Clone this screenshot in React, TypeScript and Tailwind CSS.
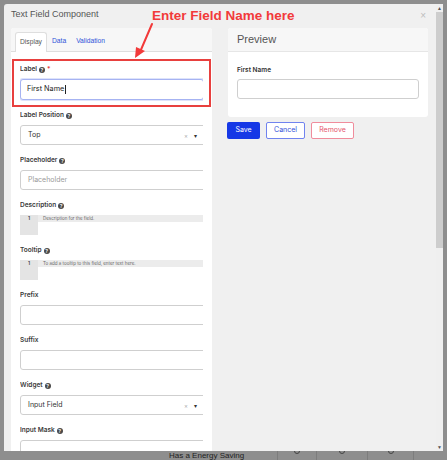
import React from 'react';

const Help: React.FC = () => (
  <span className="ml-[2px] inline-flex h-[6px] w-[6px] items-center justify-center rounded-full bg-[#4a4a4a] text-[5px] font-bold leading-none text-white">
    ?
  </span>
);

interface FieldProps {
  label: string;
  help?: boolean;
  required?: boolean;
  children: React.ReactNode;
}

const Field: React.FC<FieldProps> = ({ label, help, required, children }) => (
  <div className="mb-[11px]">
    <div className="mb-[4px] flex h-[10px] items-center text-[6.5px] font-semibold text-[#3a3a3a]">
      {label}
      {help && <Help />}
      {required && <span className="ml-[2px] text-[#e53935]">*</span>}
    </div>
    {children}
  </div>
);

const TextInput: React.FC<{ value?: string; placeholder?: string }> = ({ value, placeholder }) => (
  <div className="flex h-[20px] w-[192px] items-center rounded-[3px] border border-[#cfcfcf] bg-white px-[7px] text-[7px]">
    {value && <span className="text-[#222]">{value}</span>}
    {placeholder && <span className="text-[#9a9a9a]">{placeholder}</span>}
  </div>
);

const Select: React.FC<{ value: string }> = ({ value }) => (
  <div className="flex h-[20px] w-[192px] items-center rounded-[3px] border border-[#cfcfcf] bg-white pl-[7px] pr-[14px] text-[7px] text-[#333]">
    <span className="flex-1">{value}</span>
    <span className="mr-[6px] text-[6px] text-[#aaa]">×</span>
    <span className="text-[6px] text-[#333]">▾</span>
  </div>
);

const Editor: React.FC<{ text: string }> = ({ text }) => (
  <div className="flex h-[20px] w-[192px]">
    <div className="flex h-full w-[18px] justify-center bg-[#e4e4e4]">
      <span className="text-[5px] leading-[7px] font-semibold text-[#444]">1</span>
    </div>
    <div className="h-[7px] flex-1 bg-[#ececec] pl-[5px] text-[4.5px] leading-[7px] text-[#666]">{text}</div>
  </div>
);

export default function App() {
  return (
    <div
      className="h-[460px] w-[447px] overflow-hidden bg-[#8e8e8e]"
      style={{ fontFamily: '"Liberation Sans", Arial, sans-serif' }}
    >
      <div className="flex h-[451px] pl-[4px] pt-[4px]">
        <div className="relative flex h-[447px] w-[432px] flex-col overflow-hidden rounded-tl-[3px] bg-[#f0f0f0]">
          {/* title */}
          <div className="flex h-[24px] shrink-0 items-center justify-between pl-[7px] pr-[10px] pb-[2px]">
            <span className="text-[9px] text-[#555]">Text Field Component</span>
            <span className="text-[10px] text-[#bdbdbd]">×</span>
          </div>

          <div className="flex gap-[16px] pl-[7px]">
            {/* left card */}
            <div className="w-[201px] shrink-0 rounded-t-[3px] bg-white">
              <div className="flex h-[24px] items-end gap-[5px] rounded-t-[3px] border-b border-[#dedede] bg-[#f7f7f7] pl-[4px] text-[6.7px]">
                <div className="-mb-px flex h-[20px] w-[32px] items-center justify-center rounded-t-[3px] border border-b-0 border-[#dedede] bg-white text-[#555]">
                  Display
                </div>
                <div className="flex h-[19px] items-center gap-[10px] text-[#2f52d9]">
                  <span>Data</span>
                  <span>Validation</span>
                </div>
              </div>

              <div className="relative pt-[13px] pl-[9px]" style={{ fontFamily: 'Inter, "Liberation Sans", sans-serif' }}>
                <div className="w-[183px] overflow-hidden">
                  <Field label="Label" help required>
                    <div className="flex h-[21px] w-[184px] items-center rounded-[3px] border border-[#a6b3f2] bg-white px-[6px] text-[7.3px] text-[#222] shadow-[0_0_0_1px_#dde3fb]">
                      First Name<span className="ml-px h-[9px] w-px bg-[#222]" />
                    </div>
                  </Field>
                  <Field label="Label Position" help>
                    <Select value="Top" />
                  </Field>
                  <Field label="Placeholder" help>
                    <TextInput placeholder="Placeholder" />
                  </Field>
                  <Field label="Description" help>
                    <Editor text="Description for the field." />
                  </Field>
                  <Field label="Tooltip" help>
                    <Editor text="To add a tooltip to this field, enter text here." />
                  </Field>
                  <Field label="Prefix">
                    <TextInput />
                  </Field>
                  <Field label="Suffix">
                    <TextInput />
                  </Field>
                  <Field label="Widget" help>
                    <Select value="Input Field" />
                  </Field>
                  <Field label="Input Mask" help>
                    <TextInput />
                  </Field>
                </div>

                {/* red highlight box */}
                <div className="absolute left-[1px] top-[7px] h-[48px] w-[199px] border-2 border-[#e8403e]" />
              </div>
            </div>

            {/* right column */}
            <div className="w-[200px] shrink-0" style={{ fontFamily: 'Inter, "Liberation Sans", sans-serif' }}>
              <div className="rounded-[3px] bg-white">
                <div className="flex h-[24px] items-center rounded-t-[3px] border-b border-[#e6e6e6] bg-[#f7f7f7] pl-[9px] text-[11px] text-[#555]" style={{ fontFamily: '"Liberation Sans", Arial, sans-serif' }}>
                  Preview
                </div>
                <div className="px-[9px] pb-[18px] pt-[14px]">
                  <div className="mb-[4px] h-[9px] text-[6.5px] leading-[9px] font-semibold text-[#333]">First Name</div>
                  <div className="h-[20px] w-[182px] rounded-[3px] border border-[#cfcfcf] bg-white" />
                </div>
              </div>
              <div className="mt-[5px] -ml-px flex gap-[6px] text-[7px]">
                <div className="flex h-[17px] w-[33px] items-center justify-center rounded-[2px] bg-[#1638e6] text-white">Save</div>
                <div className="flex h-[17px] w-[39px] items-center justify-center rounded-[2px] border border-[#7083ef] bg-white text-[#3350d8]">Cancel</div>
                <div className="flex h-[17px] w-[43px] items-center justify-center rounded-[2px] border border-[#f08c9c] bg-white text-[#e5556b]">Remove</div>
              </div>
            </div>
          </div>

          {/* annotation */}
          <div className="absolute left-[148px] top-[4px] text-[13.5px] font-bold leading-[16px] text-[#f23a3a]">
            Enter Field Name here
          </div>
          <svg className="absolute left-[126px] top-[18px]" width="26" height="40" viewBox="0 0 26 40">
            <line x1="22" y1="2" x2="10" y2="30" stroke="#f23a3a" strokeWidth="2" strokeLinecap="round" />
            <polygon points="5,36 6,25 15,29" fill="#f23a3a" />
          </svg>
        </div>

        {/* scrollbar */}
        <div className="flex h-[447px] w-[7px] flex-col items-center bg-[#efefef]">
          <span className="h-[8px] text-[5px] leading-[8px] text-[#555]">▲</span>
          <div className="h-[236px] w-[7px] bg-[#cdcdcd]" />
          <div className="flex-1" />
          <span className="h-[8px] text-[5px] leading-[8px] text-[#555]">▼</span>
        </div>
      </div>

      {/* page behind */}
      <div className="flex h-[9px] items-start text-[8px] leading-[9px] text-[#222]">
        <div className="w-[169px]" />
        <div className="w-[108px]">Has a Energy Saving</div>
        <div className="flex h-[9px] w-[39px] justify-center border-l border-[#7d7d7d]">
          <span className="-mt-[3px] h-[6px] w-[6px] rounded-full border border-[#444]" />
        </div>
        <div className="flex h-[9px] w-[51px] justify-center border-l border-[#7d7d7d]">
          <span className="-mt-[3px] h-[6px] w-[6px] rounded-full border border-[#444]" />
        </div>
        <div className="flex h-[9px] w-[46px] justify-center border-l border-[#7d7d7d]">
          <span className="-mt-[3px] h-[6px] w-[6px] rounded-full border border-[#444]" />
        </div>
        <div className="h-[9px] border-l border-[#7d7d7d]" />
      </div>
    </div>
  );
}
